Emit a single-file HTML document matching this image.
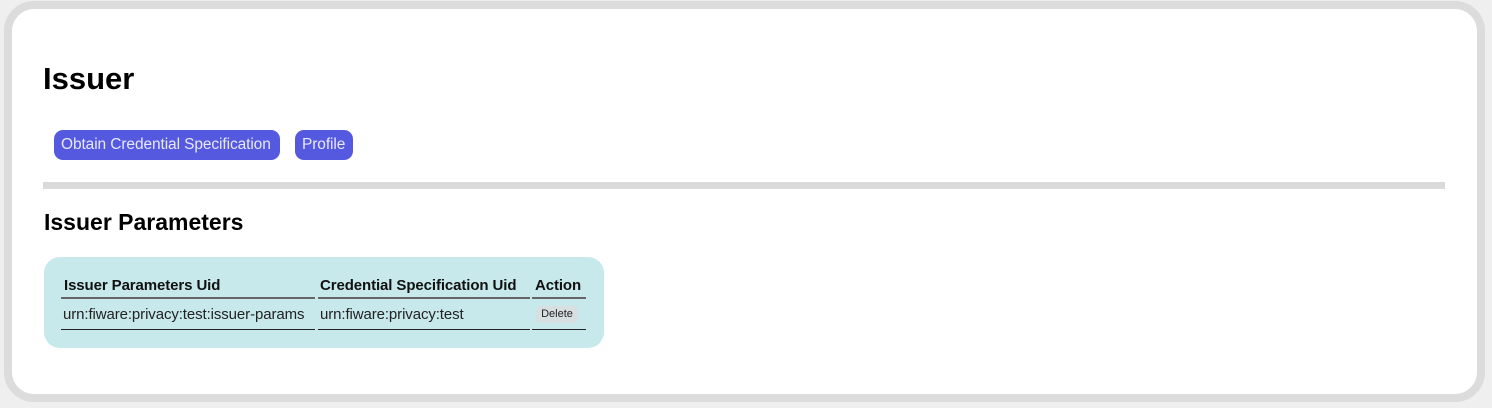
<!DOCTYPE html>
<html><head><style>
html,body{margin:0;padding:0;width:1492px;height:408px;background:#efefef;overflow:hidden;font-family:"Liberation Sans",sans-serif;}
.outer{position:absolute;left:4px;top:1px;width:1481px;height:401px;box-sizing:border-box;border:8px solid #dcdcdc;border-radius:30px;background:#fff;}
h1{position:absolute;left:43px;top:61px;margin:0;font-size:31px;font-weight:bold;color:#000;}
.btn{position:absolute;top:130px;height:30px;line-height:29px;background:#5459e0;color:#e8e8ff;border-radius:9px;font-size:15.5px;padding:0 7px;box-sizing:border-box;white-space:nowrap;letter-spacing:-0.1px;}
.hr{position:absolute;left:43px;top:182px;width:1402px;height:7px;background:#dadada;}
h2{position:absolute;left:44px;top:209px;margin:0;font-size:23px;font-weight:bold;}
.box{position:absolute;left:44px;top:257px;width:560px;height:91px;background:#c8e9ec;border-radius:16px;}
.c{position:absolute;font-size:15px;white-space:nowrap;letter-spacing:-0.1px;}
.th{font-weight:bold;color:#111;top:277px;}
.td{color:#222;top:306px;}
.l1{position:absolute;height:2px;background:#666;top:297px;}
.l2{position:absolute;height:1px;background:#222;top:329px;}
.del{position:absolute;left:536px;top:306px;width:42px;height:17px;border-radius:4px;font-size:11px;line-height:17px;text-align:center;color:#222;background:#d8dfe0;}
</style></head><body>
<div class="outer"></div>
<h1>Issuer</h1>
<div class="btn" style="left:54px;width:226px;">Obtain Credential Specification</div>
<div class="btn" style="left:295px;width:58px;">Profile</div>
<div class="hr"></div>
<h2>Issuer Parameters</h2>
<div class="box"></div>
<div class="c th" style="left:64px">Issuer Parameters Uid</div>
<div class="c th" style="left:320px">Credential Specification Uid</div>
<div class="c th" style="left:535px">Action</div>
<div class="l1" style="left:61px;width:254px"></div>
<div class="l1" style="left:318px;width:212px"></div>
<div class="l1" style="left:532px;width:54px"></div>
<div class="c td" style="left:63px">urn:fiware:privacy:test:issuer-params</div>
<div class="c td" style="left:320px">urn:fiware:privacy:test</div>
<div class="del">Delete</div>
<div class="l2" style="left:61px;width:254px"></div>
<div class="l2" style="left:318px;width:212px"></div>
<div class="l2" style="left:532px;width:54px"></div>
</body></html>
